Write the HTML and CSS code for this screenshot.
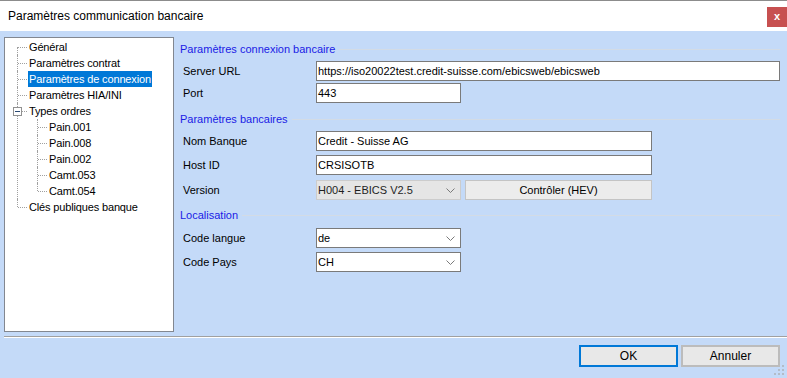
FILE: index.html
```html
<!DOCTYPE html>
<html>
  <head>
    <meta charset="utf-8">
    <title>Paramètres communication bancaire</title>
    <link rel="stylesheet" href="styles.css">
  </head>
  <body>
    <div class="window">
      <div class="titlebar">
        <span class="title">Paramètres communication bancaire</span>
        <span class="close">x</span>
      </div>

      <div class="main">
        <div class="tree">
          <ul class="tree-root">
            <li class="first"><span class="node">Général</span></li>
            <li><span class="node">Paramètres contrat</span></li>
            <li><span class="node selected">Paramètres de connexion</span></li>
            <li><span class="node">Paramètres HIA/INI</span></li>
            <li class="open">
              <span class="toggle"></span><span class="node">Types ordres</span>
              <ul class="tree-sub">
                <li><span class="node">Pain.001</span></li>
                <li><span class="node">Pain.008</span></li>
                <li><span class="node">Pain.002</span></li>
                <li><span class="node">Camt.053</span></li>
                <li class="last"><span class="node">Camt.054</span></li>
              </ul>
            </li>
            <li class="last"><span class="node">Clés publiques banque</span></li>
          </ul>
        </div>

        <div class="form">
          <!-- connexion -->
          <div class="group-title gt-first"><span>Paramètres connexion bancaire</span><div class="rule"></div></div>
          <div class="row r-url">
            <label>Server URL</label>
            <div class="field w-url">https://iso20022test.credit-suisse.com/ebicsweb/ebicsweb</div>
          </div>
          <div class="row r-port">
            <label>Port</label>
            <div class="field w-small">443</div>
          </div>

          <!-- banque -->
          <div class="group-title gt-bank"><span>Paramètres bancaires</span><div class="rule"></div></div>
          <div class="row r-nom">
            <label>Nom Banque</label>
            <div class="field w-mid">Credit - Suisse AG</div>
          </div>
          <div class="row r-host">
            <label>Host ID</label>
            <div class="field w-mid">CRSISOTB</div>
          </div>
          <div class="row r-version">
            <label>Version</label>
            <div class="combo combo-list w-small">
              <span>H004 - EBICS V2.5</span>
              <svg class="chev" width="9" height="5" viewBox="0 0 9 5"><polyline points="0.5,0.5 4.5,4.5 8.5,0.5" fill="none" stroke="#7a7a7a" stroke-width="1"/></svg>
            </div>
            <button class="btn-check">Contrôler (HEV)</button>
          </div>

          <!-- localisation -->
          <div class="group-title gt-loc"><span>Localisation</span><div class="rule"></div></div>
          <div class="row r-lang">
            <label>Code langue</label>
            <div class="combo w-small">
              <span>de</span>
              <svg class="chev" width="9" height="5" viewBox="0 0 9 5"><polyline points="0.5,0.5 4.5,4.5 8.5,0.5" fill="none" stroke="#7a7a7a" stroke-width="1"/></svg>
            </div>
          </div>
          <div class="row r-pays">
            <label>Code Pays</label>
            <div class="combo w-small">
              <span>CH</span>
              <svg class="chev" width="9" height="5" viewBox="0 0 9 5"><polyline points="0.5,0.5 4.5,4.5 8.5,0.5" fill="none" stroke="#7a7a7a" stroke-width="1"/></svg>
            </div>
          </div>
        </div>
      </div>

      <div class="separator"></div>

      <div class="footer">
        <button class="btn btn-default">OK</button>
        <button class="btn">Annuler</button>
      </div>

      <svg class="grip" width="12" height="12" viewBox="0 0 12 12">
        <rect x="8" y="0" width="2" height="2" fill="#b3bcc8"/>
        <rect x="4" y="4" width="2" height="2" fill="#b3bcc8"/>
        <rect x="8" y="4" width="2" height="2" fill="#b3bcc8"/>
        <rect x="0" y="8" width="2" height="2" fill="#b3bcc8"/>
        <rect x="4" y="8" width="2" height="2" fill="#b3bcc8"/>
        <rect x="8" y="8" width="2" height="2" fill="#b3bcc8"/>
      </svg>
    </div>
  </body>
</html>
```

FILE: styles.css
```css
body {
    margin: 0;
    font-family: "Liberation Sans", Arial, sans-serif;
    font-size: 11px;
    color: #000;
    background-color: #c4daf8;
}

.window {
    position: relative;
    width: 787px;
    height: 378px;
    overflow: hidden;
    background-color: #c4daf8;
}

/* title bar */
.titlebar {
    display: flex;
    align-items: center;
    height: 30px;
    border-top: 1px solid #8c8c8c;
    background-color: #fff;
}

.title {
    padding-left: 8px;
    font-size: 12px;
    color: #000;
}

.close {
    align-self: flex-start;
    margin-top: 6px;
    margin-left: auto;
    width: 20px;
    height: 20px;
    line-height: 18px;
    text-align: center;
    background-color: #c75050;
    color: #fff;
    font-weight: bold;
    font-size: 11px;
}

/* main area */
.main {
    display: flex;
    height: 305px;
}

.tree {
    box-sizing: border-box;
    width: 171px;
    height: 295px;
    margin: 6px 0 0 4px;
    border: 1px solid #828790;
    background-color: #fff;
    letter-spacing: -0.15px;
}

.tree ul {
    list-style: none;
    margin: 0;
    padding: 0;
}

.tree-root {
    padding-top: 1px !important;
}

.tree li {
    position: relative;
    line-height: 16px;
}

.node {
    display: inline-block;
    height: 16px;
    padding: 0 1px;
    white-space: nowrap;
}

.tree-root > li > .node { margin-left: 23px; }
.tree-sub > li > .node { margin-left: 43px; }

.node.selected {
    background-color: #0078d7;
    color: #fff;
}

/* dotted connector lines */
.tree li::before {
    content: "";
    position: absolute;
    top: 8px;
    width: 9px;
    border-top: 1px dotted #a0a0a0;
}

.tree li::after {
    content: "";
    position: absolute;
    top: 0;
    bottom: 0;
    border-left: 1px dotted #a0a0a0;
}

.tree-root > li::before { left: 13px; }
.tree-root > li::after { left: 12px; }
.tree-sub > li::before { left: 33px; }
.tree-sub > li::after { left: 32px; }

.tree li.first::after { top: 8px; }
.tree li.last::after { bottom: auto; height: 8px; }

.toggle {
    position: absolute;
    z-index: 1;
    left: 8px;
    top: 4px;
    box-sizing: border-box;
    width: 9px;
    height: 9px;
    border: 1px solid #919191;
    background-color: #fff;
}

.toggle::after {
    content: "";
    position: absolute;
    left: 1px;
    top: 3px;
    width: 5px;
    height: 1px;
    background-color: #2b4a74;
}

/* form */
.form {
    flex: 1;
    padding: 11px 7px 0 6px;
}

.group-title {
    display: flex;
    height: 14px;
    line-height: 14px;
    color: #1a1ae6;
}

.group-title .rule {
    flex: 1;
    margin: 7px 0 0 4px;
    height: 0;
    border-top: 1px solid #d3dbe5;
}

.gt-bank { margin-top: 9px; }
.gt-loc { margin-top: 8px; }

.row {
    display: flex;
    align-items: center;
    height: 20px;
    padding-left: 3px;
}

.row label {
    width: 133px;
}

.r-url { margin-top: 5px; }
.r-port { margin-top: 2px; }
.r-nom { margin-top: 5px; }
.r-host { margin-top: 4px; }
.r-version { margin-top: 5px; }
.r-lang { margin-top: 6px; }
.r-pays { margin-top: 4px; }

.field, .combo {
    box-sizing: border-box;
    height: 20px;
    line-height: 18px;
    padding: 0 1px;
    border: 1px solid #7a7a7a;
    background-color: #fff;
    white-space: nowrap;
    overflow: hidden;
}

.w-url { width: 464px; }
.w-mid { width: 336px; }
.w-small { width: 145px; }

.combo {
    display: flex;
    align-items: center;
    justify-content: space-between;
    padding-right: 5px;
}

.combo-list {
    background-color: #e5e5e5;
    border-color: #cccccc;
    color: #1e1e1e;
}

.btn-check {
    box-sizing: border-box;
    width: 187px;
    height: 20px;
    margin-left: 4px;
    padding: 0;
    border: 1px solid #c4c4c4;
    background-color: #ececec;
    font-family: inherit;
    font-size: 11px;
    font-weight: normal;
    color: #000;
}

/* bottom */
.separator {
    margin-left: 4px;
    border-top: 1px solid #a0a0a0;
    border-bottom: 1px solid #fff;
}

.footer {
    display: flex;
    justify-content: flex-end;
    gap: 3px;
    padding: 7px 7px 0 0;
}

.btn {
    box-sizing: border-box;
    width: 99px;
    height: 22px;
    padding: 0;
    border: 2px solid #bcbcbc;
    background-color: #e8e8e8;
    font-family: inherit;
    font-size: 12px;
    font-weight: normal;
    color: #000;
}

.btn-default {
    border-color: #0078d7;
}

.grip {
    position: absolute;
    right: 1px;
    bottom: 1px;
}
```
